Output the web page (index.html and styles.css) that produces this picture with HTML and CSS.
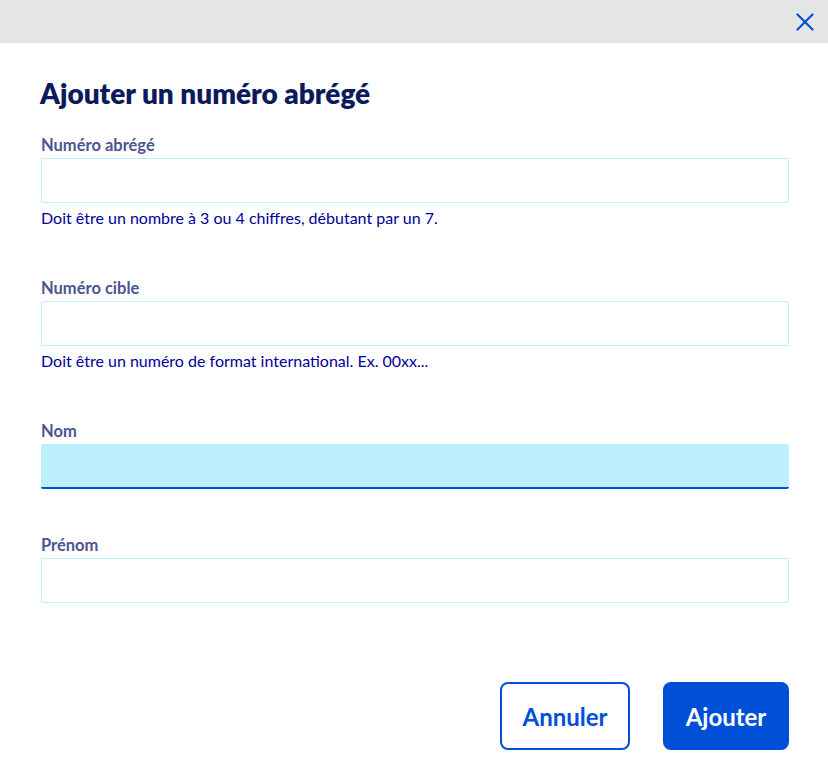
FILE: index.html
```html
<!DOCTYPE html>
<html lang="fr">
<head>
<meta charset="utf-8">
<title>Ajouter un numéro abrégé</title>
<link rel="stylesheet" href="styles.css">
</head>
<body>
<div class="modal">
  <div class="topbar">
    <button class="close" aria-label="Fermer">
      <svg width="18" height="18" viewBox="0 0 18 18"><path d="M1.5 1.5 L16.5 16.5 M16.5 1.5 L1.5 16.5" stroke="#0050d7" stroke-width="2.2" stroke-linecap="round"/></svg>
    </button>
  </div>
  <div class="content">
    <h1 class="title">Ajouter un numéro abrégé</h1>
    <div class="field">
      <label class="label">Numéro abrégé</label>
      <div class="input"></div>
      <p class="help">Doit être un nombre à 3 ou 4 chiffres, débutant par un 7.</p>
    </div>
    <div class="field">
      <label class="label">Numéro cible</label>
      <div class="input"></div>
      <p class="help">Doit être un numéro de format international. Ex. 00xx...</p>
    </div>
    <div class="field">
      <label class="label">Nom</label>
      <div class="input focus"></div>
    </div>
    <div class="field last">
      <label class="label">Prénom</label>
      <div class="input"></div>
    </div>
    <div class="actions">
      <button class="btn secondary">Annuler</button>
      <button class="btn primary">Ajouter</button>
    </div>
  </div>
</div>
</body>
</html>
```
FILE: styles.css
```css
* { box-sizing: border-box; }
body {
  margin: 0;
  background: #fff;
  font-family: Lato, "Noto Sans", sans-serif;
}
.topbar {
  height: 43px;
  background: #e5e5e5;
  display: flex;
  justify-content: flex-end;
  align-items: center;
  padding-right: 14px;
}
.close {
  border: 0;
  background: transparent;
  padding: 0;
  width: 18px;
  height: 18px;
  display: flex;
}
.content {
  padding: 34px 39px 0 41px;
}
.title {
  margin: 0 0 0 -1px;
  font-size: 28px;
  line-height: 32px;
  font-weight: 800;
  color: #0b1a5c;
}
.field {
  margin-top: 26px;
}
.field + .field { margin-top: 50px; }
.field.last { margin-top: 46px; }
.label {
  display: block;
  font-size: 16.5px;
  line-height: 20px;
  font-weight: 700;
  color: #4b5592;
  margin-bottom: 3px;
}
.input {
  height: 45px;
  border: 1px solid #bdf0ff;
  border-radius: 2px;
  background: #fff;
}
.input.focus {
  background: #bdf0ff;
  border: 0;
  border-bottom: 2px solid #0050d7;
}
.help {
  margin: 5px 0 0;
  font-size: 16px;
  line-height: 20px;
  color: #00009a;
}
.actions {
  display: flex;
  justify-content: flex-end;
  gap: 33px;
  margin-top: 79px;
}
.btn {
  height: 68px;
  border-radius: 8px;
  font-family: inherit;
  font-size: 24px;
  font-weight: 700;
  padding: 0;
}
.secondary {
  width: 130px;
  background: #fff;
  border: 2px solid #0050d7;
  color: #0050d7;
}
.primary {
  width: 126px;
  background: #0050d7;
  border: 0;
  color: #fff;
}
```
